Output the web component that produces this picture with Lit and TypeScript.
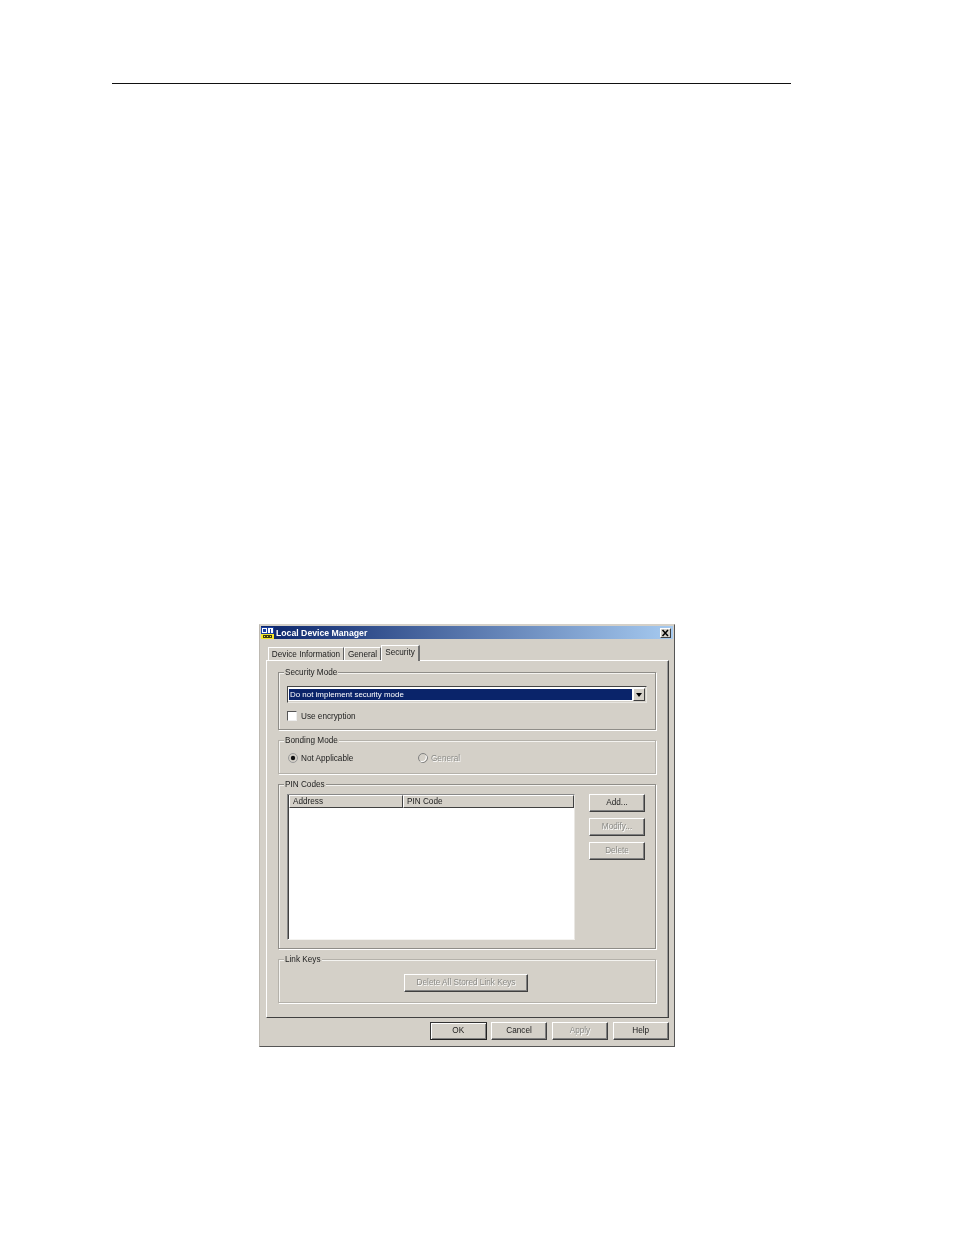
import { LitElement, html, css } from "lit";
import { customElement } from "lit/decorators.js";

@customElement("app-root")
export class AppRoot extends LitElement {
  static styles = css`
    :host { display: block; width: 954px; height: 1235px; background: #fff; overflow: hidden;
      font: 8.2px/10px "Liberation Sans", Arial, sans-serif; color: #222; }
    * { box-sizing: border-box; }
    .rule { height: 1px; width: 679px; margin: 83px 0 540px 112px; background: #111; }
    .window { width: 416px; height: 423px; margin-left: 259px; background: #d4d0c8; padding: 1px;
      border: 1px solid; border-color: #d4d0c8 #555 #555 #bdb9b2; display: flex; flex-direction: column; }
    .t { filter: blur(0.3px); white-space: nowrap; }
    .title { height: 13px; display: flex; align-items: center; gap: 2px;
      background: linear-gradient(90deg, #0a246a 0%, #a6caf0 100%); color: #fff;
      font-weight: bold; font-size: 8.7px; }
    .title svg { display: block; flex: none; }
    .close { margin-left: auto; margin-right: 2px; width: 11px; height: 10px; background: #d4d0c8; display: flex;
      border: 1px solid; border-color: #fff #404040 #404040 #fff; }
    .close svg { margin: 0 auto; }
    .tabs { display: flex; align-items: flex-end; height: 15px; margin-top: 6px; padding-left: 7px; position: relative; z-index: 1; }
    .tab { height: 13px; padding-top: 2px; text-align: center; border-left: 1px solid #fff; border-top: 1px solid #fff; border-right: 1px solid #606060; }
    .tab.a { width: 76px; }
    .tab.b { width: 37px; }
    .tab.c { width: 39px; height: 16px; margin-bottom: -1px; padding-top: 2px; background: #d4d0c8; border-right: 2px solid #707070; }
    .panel { width: 403px; height: 358px; margin-left: 5px; padding: 11px 11px 0 11px; display: flex; flex-direction: column; gap: 10px;
      border: 1px solid; border-color: #fff #404040 #404040 #fff; box-shadow: inset -1px 0 0 #999; }
    .group { position: relative; width: 378px; border: 1px solid #8f8d88; box-shadow: 1px 1px 0 #fff, inset 1px 1px 0 #f4f3f0; }
    .group.soft { border-color: #b4b1aa; }
    .legend { position: absolute; top: -5px; left: 5px; padding: 0 1px; background: #d4d0c8; }
    .sec { height: 58px; padding: 13px 0 0 8px; }
    .bond { height: 34px; padding: 12px 0 0 9px; display: grid; grid-template-columns: 130px 1fr; }
    .pin { height: 165px; padding: 9px 0 0 8px; display: flex; gap: 14px; }
    .link { height: 44px; padding: 14px 0 0 125px; }
    .combo { width: 360px; height: 17px; display: flex; padding: 1px; background: #fff;
      border: 1px solid; border-color: #444 #e8e6e1 #e8e6e1 #444; box-shadow: inset -1px -1px 0 #d4d0c8; }
    .sel { flex: 1; background: #0a246a; color: #fff; padding: 1px 0 0 1px; border: 1px solid #fff; border-left-width: 0; font-size: 7.95px; }
    .arrow { width: 12px; background: #d4d0c8; border: 1px solid; border-color: #fff #404040 #404040 #fff; display: flex; align-items: center; justify-content: center; }
    .check { display: flex; align-items: center; gap: 4px; margin-top: 8px; height: 10px; }
    .box { width: 10px; height: 10px; background: #fff; border: 1px solid; border-color: #555 #eee #eee #555; }
    .radio { display: flex; align-items: center; gap: 3px; height: 10px; }
    .radio svg { display: block; flex: none; }
    .lbl { padding-top: 2px; }
    .off { color: #8a8a86; text-shadow: 0.7px 0.7px 0 #fff; }
    .list { width: 288px; height: 146px; background: #fff; border: 1px solid; border-color: #888 #e9e7e3 #f4f3f0 #888;
      box-shadow: inset 1px 0 0 #404040; padding-left: 1px; }
    .head { display: grid; grid-template-columns: 114px 1fr; height: 13px; background: #d4d0c8; }
    .head div { padding: 1px 0 0 3px; border: 1px solid; border-color: #fff #404040 #404040 #fff; }
    .side { display: flex; flex-direction: column; gap: 6px; }
    .btn { display: flex; align-items: center; justify-content: center; width: 56px; height: 18px; padding-bottom: 1px; background: #d4d0c8;
      border: 1px solid; border-color: #fff #404040 #404040 #fff; box-shadow: inset -1px -1px 0 #808080; }
    .btn.wide { width: 124px; }
    .btn.def { border-color: #333 #222 #222 #333; box-shadow: inset 1px 1px 0 #fff, inset -1px -1px 0 #808080; }
    .footer { display: flex; justify-content: flex-end; gap: 4.33px; margin-top: 4px; padding-right: 4px; }
    .footer .btn { width: 56.5px; }
  `;

  render() {
    return html`
      <div class="rule"></div>
      <div class="window">
        <div class="title">
          <svg width="13" height="12" viewBox="0 0 13 12">
            <rect width="13" height="12" fill="#1a3fa0" />
            <rect x="1" y="1" width="5" height="5" fill="#fff" />
            <rect x="7" y="1" width="5" height="5" fill="#fff" />
            <rect x="2" y="2" width="3" height="3" fill="#1a3fa0" />
            <rect x="9" y="2" width="1" height="4" fill="#1a3fa0" />
            <rect x="0" y="7" width="13" height="5" fill="#f5e62a" />
            <rect x="2" y="8" width="9" height="3" fill="#3b3a10" />
            <rect x="3" y="9" width="1" height="1" fill="#f5e62a" />
            <rect x="6" y="9" width="1" height="1" fill="#f5e62a" />
            <rect x="9" y="9" width="1" height="1" fill="#f5e62a" />
          </svg>
          <span class="t">Local Device Manager</span>
          <div class="close">
            <svg width="9" height="8" viewBox="0 0 9 8"><path d="M1.5 1 L7 7 M7 1 L1.5 7" stroke="#000" stroke-width="1.5" fill="none" /></svg>
          </div>
        </div>
        <div class="tabs">
          <div class="tab a"><span class="t">Device Information</span></div>
          <div class="tab b"><span class="t">General</span></div>
          <div class="tab c"><span class="t">Security</span></div>
        </div>
        <div class="panel">
          <div class="group sec">
            <div class="legend t">Security Mode</div>
            <div class="combo">
              <div class="sel t">Do not implement security mode</div>
              <div class="arrow"><svg width="6" height="4" viewBox="0 0 6 4"><path d="M0 0H6L3 4Z" fill="#000" /></svg></div>
            </div>
            <div class="check"><div class="box"></div><span class="t lbl">Use encryption</span></div>
          </div>
          <div class="group soft bond">
            <div class="legend t">Bonding Mode</div>
            <div class="radio">
              <svg width="10" height="10" viewBox="0 0 10 10"><circle cx="5" cy="5" r="4.5" fill="#d4d0c8" stroke="#999" /><circle cx="5" cy="5" r="2.2" fill="#111" /></svg>
              <span class="t lbl">Not Applicable</span>
            </div>
            <div class="radio">
              <svg width="10" height="10" viewBox="0 0 10 10"><circle cx="5" cy="5" r="4.5" fill="#d4d0c8" stroke="#808080" /><path d="M8 2.5A4.5 4.5 0 0 1 2.5 8.5" fill="none" stroke="#fff" /></svg>
              <span class="t off lbl">General</span>
            </div>
          </div>
          <div class="group pin">
            <div class="legend t">PIN Codes</div>
            <div class="list">
              <div class="head">
                <div class="t">Address</div>
                <div class="t">PIN Code</div>
              </div>
            </div>
            <div class="side">
              <div class="btn"><span class="t">Add...</span></div>
              <div class="btn"><span class="t off">Modify...</span></div>
              <div class="btn"><span class="t off">Delete</span></div>
            </div>
          </div>
          <div class="group soft link">
            <div class="legend t">Link Keys</div>
            <div class="btn wide"><span class="t off">Delete All Stored Link Keys</span></div>
          </div>
        </div>
        <div class="footer">
          <div class="btn def"><span class="t">OK</span></div>
          <div class="btn"><span class="t">Cancel</span></div>
          <div class="btn"><span class="t off">Apply</span></div>
          <div class="btn"><span class="t">Help</span></div>
        </div>
      </div>
    `;
  }
}
